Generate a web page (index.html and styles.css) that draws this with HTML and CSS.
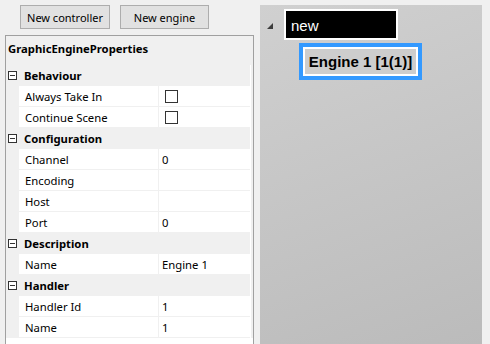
FILE: index.html
```html
<!DOCTYPE html>
<html lang="en">
<head>
	<meta charset="UTF-8">
	<title>GraphicEngine</title>
	<link rel="stylesheet" href="styles.css">
</head>
<body>
	<div class="app">
		<div class="side">
			<div class="tools">
				<button class="btn btn-ctrl">New controller</button>
				<button class="btn btn-eng">New engine</button>
			</div>
			<div class="grid">
				<div class="grid-title">GraphicEngineProperties</div>
				<div class="rows">
					<div class="cat"><span class="tog"></span>Behaviour</div>
					<div class="prop"><span class="name">Always Take In</span><span class="val"><span class="chk"></span></span></div>
					<div class="prop"><span class="name">Continue Scene</span><span class="val"><span class="chk"></span></span></div>

					<div class="cat"><span class="tog"></span>Configuration</div>
					<div class="prop"><span class="name">Channel</span><span class="val">0</span></div>
					<div class="prop"><span class="name">Encoding</span><span class="val"></span></div>
					<div class="prop"><span class="name">Host</span><span class="val"></span></div>
					<div class="prop"><span class="name">Port</span><span class="val">0</span></div>

					<div class="cat"><span class="tog"></span>Description</div>
					<div class="prop"><span class="name">Name</span><span class="val">Engine 1</span></div>

					<div class="cat"><span class="tog"></span>Handler</div>
					<div class="prop"><span class="name">Handler Id</span><span class="val">1</span></div>
					<div class="prop"><span class="name">Name</span><span class="val">1</span></div>
				</div>
			</div>
		</div>

		<div class="canvas">
			<div class="node">
				<svg class="arrow" width="6" height="6" viewBox="0 0 6 6"><polygon points="6,0 6,6 0,6" fill="#3c3c3c"/></svg>
				<div class="ctrl">new</div>
			</div>
			<div class="engine"><div class="engine-in">Engine 1 [1(1)]</div></div>
		</div>
	</div>
</body>
</html>
```
FILE: styles.css
```css
body {
	margin: 0px;
	background-color: #f0f0f0;
	color: #000000;
	font-family: "Noto Sans", "Open Sans", sans-serif;
	font-size: 11.3px;
	overflow: hidden;
}
.app {
	display: flex;
	width: 490px;
	height: 344px;
	padding-top: 5px;
	box-sizing: border-box;
}
.side {
	width: 254px;
	display: flex;
	flex-direction: column;
}
.tools {
	display: flex;
	gap: 10px;
	padding-left: 20px;
}
.btn {
	height: 24px;
	padding: 0px;
	background-color: #e1e1e1;
	border: 1px solid #adadad;
	font-family: "Noto Sans", sans-serif;
	font-size: 11px;
	color: #000;
}
.btn-ctrl { width: 90px; }
.btn-eng { width: 89px; }

.grid {
	margin: 6px 0px 0px 5px;
	flex: 1;
	border: 1px solid #a0a0a0;
	border-bottom: none;
	background-color: #ffffff;
	display: flex;
	flex-direction: column;
}
.grid-title {
	height: 29px;
	line-height: 26px;
	padding-left: 2px;
	font-weight: bold;
	background-color: #f0f0f0;
}
.rows {
	padding-right: 3px;
	background: linear-gradient(to right, #ffffff 245px, #f0f0f0 245px);
}
.cat {
	display: flex;
	align-items: center;
	height: 21px;
	background-color: #f0f0f0;
	font-weight: bold;
}
.tog {
	width: 7px;
	height: 7px;
	border: 1px solid #333;
	margin: 0px 7px 0px 2px;
	position: relative;
	background-color: #fff;
}
.tog::after {
	content: "";
	position: absolute;
	left: 1px;
	top: 3px;
	width: 5px;
	height: 1px;
	background-color: #333;
}
.prop {
	display: flex;
	height: 20px;
	border-left: 13px solid #f0f0f0;
	border-bottom: 1px solid #f0f0f0;
	background-color: #ffffff;
	line-height: 22px;
}
.name {
	width: 140px;
	padding-left: 6px;
	box-sizing: border-box;
	border-right: 1px solid #f0f0f0;
}
.val {
	flex: 1;
	padding-left: 3px;
}
.chk {
	display: block;
	width: 11px;
	height: 11px;
	border: 1px solid #333;
	margin: 4px 0px 0px 3px;
}

.canvas {
	width: 222px;
	margin-left: 6px;
	background: linear-gradient(160deg, #d0d0d0, #bbbbbb);
	padding: 4px 0px 0px 7px;
	box-sizing: border-box;
}
.node {
	display: flex;
	align-items: center;
	gap: 11px;
}
.arrow {
	margin-top: 3px;
}
.ctrl {
	height: 27px;
	width: 105px;
	background-color: #000;
	border: 2px solid #fff;
	color: #fff;
	font-family: "Liberation Sans", Arial, sans-serif;
	font-size: 15px;
	line-height: 30px;
	padding-left: 5px;
}
.engine {
	width: 111px;
	height: 25px;
	margin: 3px 0px 0px 32px;
	border: 4px solid #3399ff;
	background-color: #fff;
	padding: 2px;
}
.engine-in {
	height: 100%;
	background-color: #cdcdcd;
	font-family: "Liberation Sans", Arial, sans-serif;
	font-weight: bold;
	font-size: 15px;
	line-height: 26px;
	text-align: center;
}
```
